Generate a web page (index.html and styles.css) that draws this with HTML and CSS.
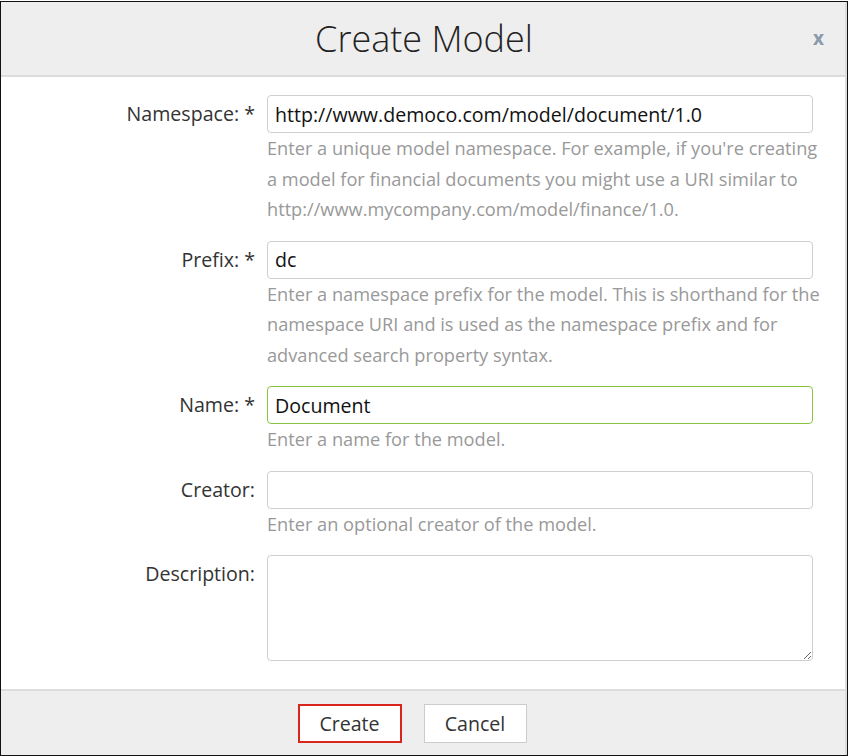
FILE: index.html
```html
<!DOCTYPE html>
<html>
<head>
<meta charset="utf-8">
<link rel="stylesheet" href="styles.css">
</head>
<body>
<div class="frame">
  <div class="dialog">
    <div class="header">
      <h1 class="title">Create Model</h1>
      <span class="close">x</span>
    </div>
    <form class="body">
      <label class="label">Namespace: *</label>
      <div class="field">
        <input class="input" type="text" value="http://www.democo.com/model/document/1.0">
        <div class="help">Enter a unique model namespace. For example, if you're creating a model for financial documents you might use a URI similar to http://www.mycompany.com/model/finance/1.0.</div>
      </div>

      <label class="label">Prefix: *</label>
      <div class="field">
        <input class="input" type="text" value="dc">
        <div class="help">Enter a namespace prefix for the model. This is shorthand for the namespace URI and is used as the namespace prefix and for advanced search property syntax.</div>
      </div>

      <label class="label">Name: *</label>
      <div class="field">
        <input class="input focused" type="text" value="Document">
        <div class="help">Enter a name for the model.</div>
      </div>

      <label class="label">Creator:</label>
      <div class="field">
        <input class="input" type="text" value="">
        <div class="help">Enter an optional creator of the model.</div>
      </div>

      <label class="label">Description:</label>
      <div class="field">
        <textarea class="textarea"></textarea>
      </div>
    </form>
    <div class="footer">
      <button class="btn primary" type="button">Create</button>
      <button class="btn" type="button">Cancel</button>
    </div>
  </div>
</div>
</body>
</html>
```

FILE: styles.css
```css
html, body {
  margin: 0;
  padding: 0;
  background: #fff;
}
body {
  font-family: "Open Sans", "Noto Sans", sans-serif;
  color: #333;
}
.frame {
  margin-top: 1px;
  width: 846px;
  height: 753px;
  border: 1px solid #111;
  box-sizing: content-box;
}
.dialog {
  height: 753px;
  border-right: 2px solid #ddd;
  box-sizing: border-box;
  display: flex;
  flex-direction: column;
  background: #fff;
}
.header {
  position: relative;
  height: 73px;
  background: #eee;
  border-bottom: 2px solid #dcdcdc;
  display: flex;
  align-items: center;
  justify-content: center;
}
.title {
  margin: 0;
  font-weight: 300;
  font-size: 36px;
  color: #222;
  padding-left: 2px;
}
.close {
  position: absolute;
  right: 21px;
  top: 23px;
  font-size: 19px;
  font-weight: 700;
  color: #8b9aab;
}
.body {
  flex: 1;
  display: grid;
  grid-template-columns: 254px 556px;
  column-gap: 12px;
  row-gap: 16px;
  align-content: start;
  padding-top: 18px;
  margin: 0;
}
.label {
  text-align: right;
  font-size: 19.6px;
  line-height: 38px;
  color: #333;
}
.field {
  display: flex;
  flex-direction: column;
  align-items: flex-start;
}
.input {
  width: 546px;
  height: 38px;
  box-sizing: border-box;
  border: 1px solid #cfcfcf;
  border-radius: 4px;
  padding: 0 7px;
  font-family: "Open Sans", "Noto Sans", sans-serif;
  font-size: 19.6px;
  color: #111;
  outline: none;
  margin: 0;
}
.input.focused {
  border-color: #86c440;
}
.help {
  font-size: 18.2px;
  line-height: 30.5px;
  color: #999;
}
.textarea {
  width: 546px;
  height: 106px;
  box-sizing: border-box;
  border: 1px solid #cfcfcf;
  border-radius: 4px;
  resize: both;
  font-family: "Open Sans", "Noto Sans", sans-serif;
  font-size: 18px;
  margin: 0;
  outline: none;
}
.footer {
  height: 64px;
  background: #eee;
  border-top: 2px solid #dcdcdc;
  display: flex;
  align-items: center;
  justify-content: center;
  gap: 22px;
  padding-right: 22px;
}
.btn {
  height: 39px;
  width: 103px;
  background: #fff;
  border: 1px solid #ccc;
  font-family: "Open Sans", "Noto Sans", sans-serif;
  font-size: 19.6px;
  color: #333;
  padding: 0;
  margin: 0;
}
.btn.primary {
  border: 2px solid #d9261c;
  width: 104px;
}
```
